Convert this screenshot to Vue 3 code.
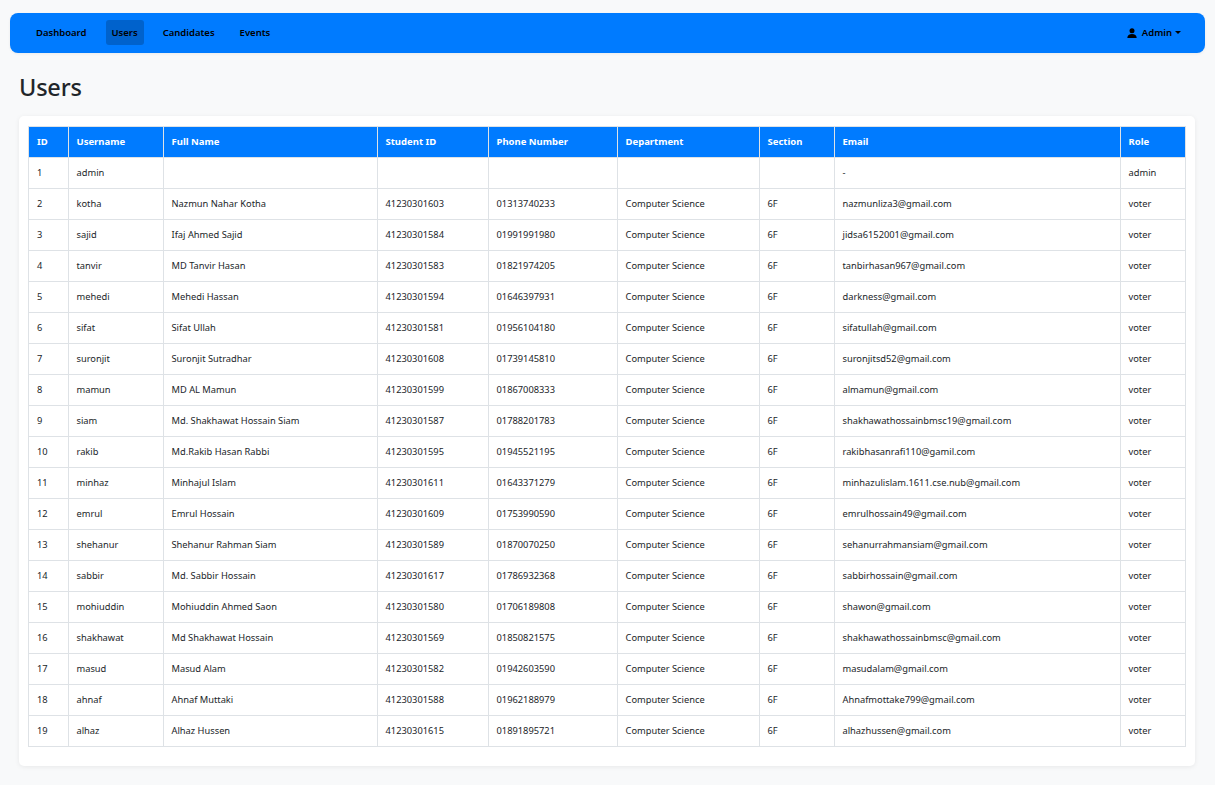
<script setup>
const headers = ['ID','Username','Full Name','Student ID','Phone Number','Department','Section','Email','Role']
const raw = `kotha|Nazmun Nahar Kotha|41230301603|01313740233|nazmunliza3@gmail.com
sajid|Ifaj Ahmed Sajid|41230301584|01991991980|jidsa6152001@gmail.com
tanvir|MD Tanvir Hasan|41230301583|01821974205|tanbirhasan967@gmail.com
mehedi|Mehedi Hassan|41230301594|01646397931|darkness@gmail.com
sifat|Sifat Ullah|41230301581|01956104180|sifatullah@gmail.com
suronjit|Suronjit Sutradhar|41230301608|01739145810|suronjitsd52@gmail.com
mamun|MD AL Mamun|41230301599|01867008333|almamun@gmail.com
siam|Md. Shakhawat Hossain Siam|41230301587|01788201783|shakhawathossainbmsc19@gmail.com
rakib|Md.Rakib Hasan Rabbi|41230301595|01945521195|rakibhasanrafi110@gamil.com
minhaz|Minhajul Islam|41230301611|01643371279|minhazulislam.1611.cse.nub@gmail.com
emrul|Emrul Hossain|41230301609|01753990590|emrulhossain49@gmail.com
shehanur|Shehanur Rahman Siam|41230301589|01870070250|sehanurrahmansiam@gmail.com
sabbir|Md. Sabbir Hossain|41230301617|01786932368|sabbirhossain@gmail.com
mohiuddin|Mohiuddin Ahmed Saon|41230301580|01706189808|shawon@gmail.com
shakhawat|Md Shakhawat Hossain|41230301569|01850821575|shakhawathossainbmsc@gmail.com
masud|Masud Alam|41230301582|01942603590|masudalam@gmail.com
ahnaf|Ahnaf Muttaki|41230301588|01962188979|Ahnafmottake799@gmail.com
alhaz|Alhaz Hussen|41230301615|01891895721|alhazhussen@gmail.com`
const rows = [
  { id: 1, username: 'admin', name: '', student: '', phone: '', dept: '', section: '', email: '-', role: 'admin' },
  ...raw.split('\n').map((l, i) => {
    const [username, name, student, phone, email] = l.split('|')
    return { id: i + 2, username, name, student, phone, dept: 'Computer Science', section: '6F', email, role: 'voter' }
  })
]
const navItems = ['Dashboard', 'Users', 'Candidates', 'Events']
</script>

<template>
  <div class="page">
    <nav class="navbar">
      <ul class="nav-links">
        <li v-for="n in navItems" :key="n" class="nav-link" :class="{ active: n === 'Users' }">{{ n }}</li>
      </ul>
      <div class="user">
        <svg class="user-icon" viewBox="0 0 16 16" width="10" height="10" fill="#000">
          <circle cx="8" cy="4.2" r="4" />
          <path d="M0.5 16c0-4.2 3.2-6.5 7.5-6.5s7.5 2.3 7.5 6.5z" />
        </svg>
        <span>Admin</span>
        <span class="caret"></span>
      </div>
    </nav>
    <h1 class="title">Users</h1>
    <section class="card">
      <table class="table">
        <colgroup>
          <col class="c1" /><col class="c2" /><col class="c3" /><col class="c4" /><col class="c5" />
          <col class="c6" /><col class="c7" /><col class="c8" /><col class="c9" />
        </colgroup>
        <thead>
          <tr><th v-for="h in headers" :key="h">{{ h }}</th></tr>
        </thead>
        <tbody>
          <tr v-for="r in rows" :key="r.id">
            <td>{{ r.id }}</td><td>{{ r.username }}</td><td>{{ r.name }}</td><td>{{ r.student }}</td>
            <td>{{ r.phone }}</td><td>{{ r.dept }}</td><td>{{ r.section }}</td><td>{{ r.email }}</td><td>{{ r.role }}</td>
          </tr>
        </tbody>
      </table>
    </section>
  </div>
</template>

<style>
html, body { margin: 0; background: #f8f9fa; }
</style>

<style scoped>
.page {
  font-family: "Noto Sans", "Open Sans", sans-serif;
  color: #212529;
  padding: 13px 10px 0;
  height: 772px;
  overflow: hidden;
}
.navbar {
  height: 40px;
  background: #007bff;
  border-radius: 8px;
  display: flex;
  align-items: center;
  justify-content: space-between;
  padding: 0 24px 0 20px;
  box-shadow: 0 1px 3px rgba(0, 0, 0, 0.06);
}
.nav-links { display: flex; list-style: none; margin: -1px 0 0; padding: 0; gap: 13px; }
.nav-link {
  font-size: 9.5px;
  font-weight: 600;
  color: #000;
  height: 25px;
  line-height: 25px;
  padding: 0 6px;
  border-radius: 3px;
}
.nav-link.active { background: #0062cc; }
.user {
  display: flex;
  align-items: center;
  font-size: 9.5px;
  font-weight: 600;
  color: #000;
  margin-top: -1px;
}
.user-icon { margin-right: 5px; margin-left: -2px; }
.caret {
  margin-left: 3px;
  border-top: 3.5px solid #000;
  border-left: 3.5px solid transparent;
  border-right: 3.5px solid transparent;
}
.title {
  font-size: 23.5px;
  font-weight: 500;
  letter-spacing: -0.2px;
  line-height: 29px;
  margin: 20px 0 14px 9px;
}
.card {
  margin: 0 10px 0 9px;
  height: 640px;
  padding: 10px 9px 0;
  background: #fff;
  border-radius: 5px;
  box-shadow: 0 1px 5px rgba(0, 0, 0, 0.07);
}
.table {
  width: 1157px;
  table-layout: fixed;
  border-collapse: collapse;
  font-size: 9.3px;
}
.c1 { width: 40px; } .c2 { width: 95px; } .c3 { width: 214px; } .c4 { width: 111px; }
.c5 { width: 129px; } .c6 { width: 142px; } .c7 { width: 75px; } .c8 { width: 286px; } .c9 { width: 65px; }
th, td {
  border: 1px solid #dee2e6;
  padding: 0 8px 2px 7.5px;
  text-align: left;
  white-space: nowrap;
}
th:first-child, td:first-child { padding-left: 8px; }
th {
  height: 28px;
  background: #007bff;
  color: #fff;
  font-size: 9.5px;
  font-weight: 700;
}
td { height: 28px; }
</style>
